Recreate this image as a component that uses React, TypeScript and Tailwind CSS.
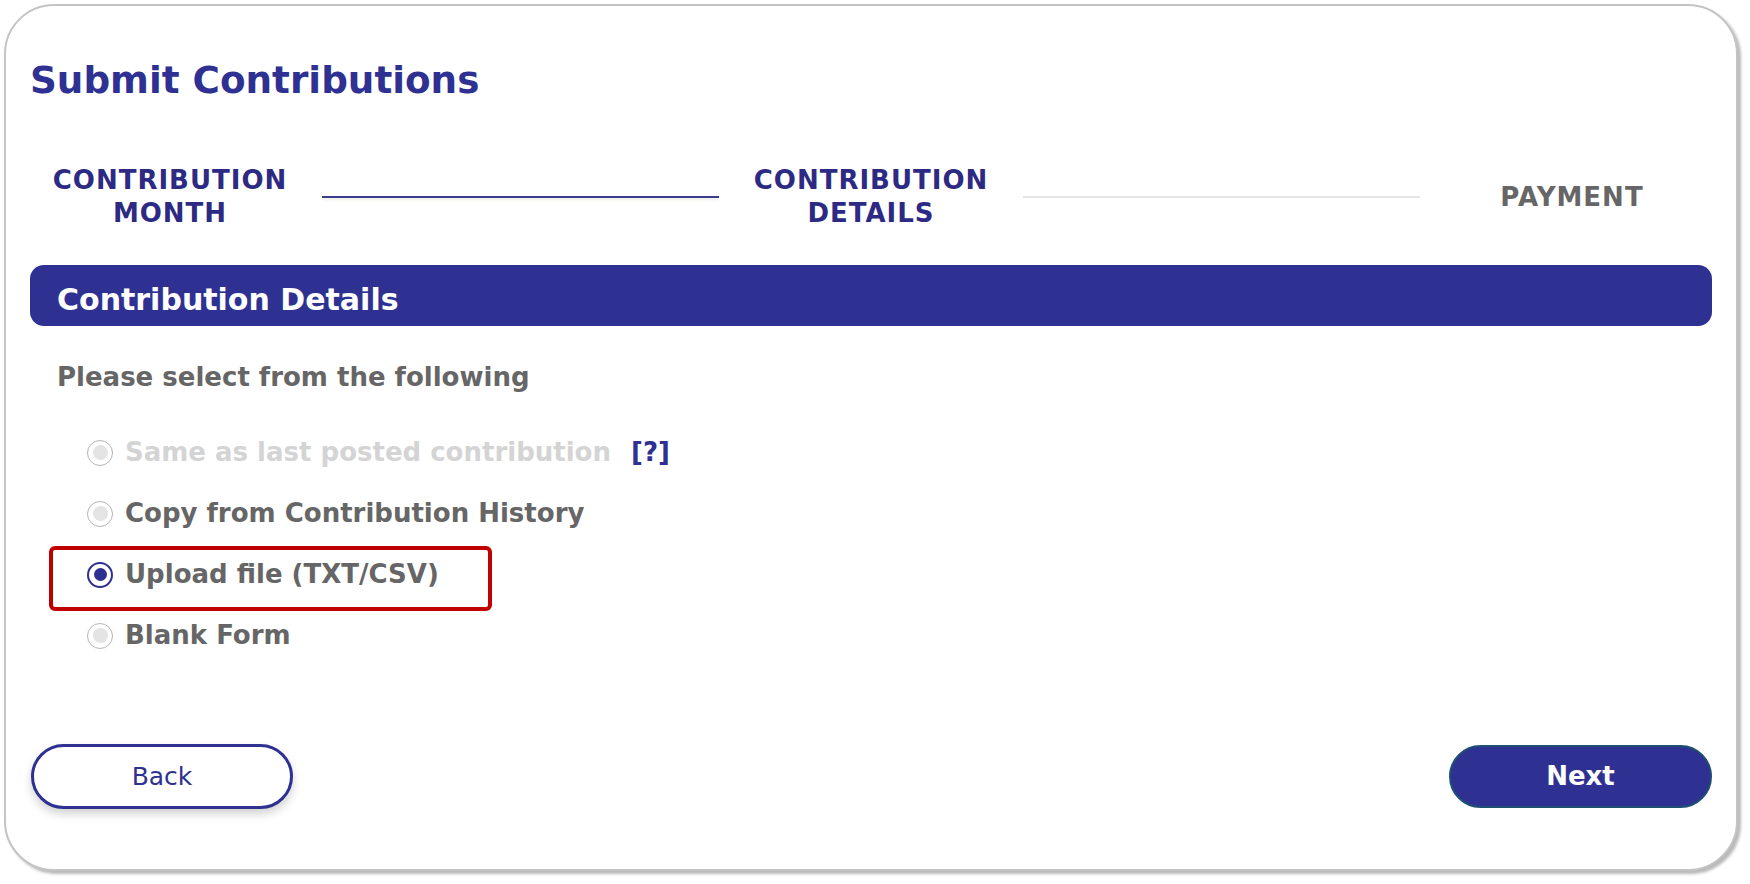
import React from "react";

function Radio({ state }: { state: "off" | "on" | "disabled" }) {
  if (state === "on") {
    return (
      <span className="flex h-[26px] w-[26px] shrink-0 items-center justify-center rounded-full border-2 border-[#2e3192] bg-white">
        <span className="h-[13px] w-[13px] rounded-full bg-[#2e3192]" />
      </span>
    );
  }
  return (
    <span className="flex h-[26px] w-[26px] shrink-0 items-center justify-center rounded-full border border-[#b5b5b5] bg-white">
      <span className="h-[15px] w-[15px] rounded-full bg-[#e4e4e4]" />
    </span>
  );
}

export default function App() {
  const font = { fontFamily: '"DejaVu Sans", Verdana, sans-serif' };
  return (
    <div className="h-[884px] w-[1750px] bg-white" style={font}>
      <div className="ml-[4px] pt-[4px]">
        <div className="flex h-[867px] w-[1734px] flex-col rounded-[50px] border-2 border-[#c4c4c4] bg-white px-[24px] shadow-[3px_3px_3px_rgba(0,0,0,0.28)]">
          <h1 className="mt-[52px] text-[37.3px] font-bold leading-[45px] text-[#2e3192]">
            Submit Contributions
          </h1>

          <div className="mt-[61px] flex items-center">
            <div className="w-[280px] text-center text-[26px] font-bold leading-[33px] tracking-[1px] text-[#2d2a84]">
              CONTRIBUTION
              <br />
              MONTH
            </div>
            <div className="mx-[12px] h-[2px] flex-1 bg-[#3b3a8c] shadow-[0_2px_3px_rgba(200,200,170,0.35)]" />
            <div className="w-[280px] text-center text-[26px] font-bold leading-[33px] tracking-[1px] text-[#2d2a84]">
              CONTRIBUTION
              <br />
              DETAILS
            </div>
            <div className="mx-[12px] h-[2px] flex-1 bg-[#e6e6e8]" />
            <div className="w-[280px] text-center text-[26px] font-bold leading-[33px] tracking-[1px] text-[#666666]">
              PAYMENT
            </div>
          </div>

          <div className="mt-[35px] flex h-[61px] items-center rounded-[14px] bg-[#2e3192] pl-[27px] pt-[7px]">
            <span className="text-[30px] font-bold text-white">Contribution Details</span>
          </div>

          <div className="mt-[36px] pl-[27px] text-[26px] font-bold leading-[30px] text-[#666666]">
            Please select from the following
          </div>

          <div className="mt-[30px] flex flex-col">
            <div className="flex h-[61px] items-center pl-[57px]">
              <Radio state="disabled" />
              <span className="ml-[12px] text-[26px] font-bold text-[#d4d4d4]">
                Same as last posted contribution
              </span>
              <span className="ml-[20px] text-[26px] font-bold text-[#2e3192]">[?]</span>
            </div>
            <div className="flex h-[61px] items-center pl-[57px]">
              <Radio state="off" />
              <span className="ml-[12px] text-[26px] font-bold text-[#666666]">
                Copy from Contribution History
              </span>
            </div>
            <div className="relative flex h-[61px] items-center pl-[57px]">
              <div className="absolute left-[19px] top-[2px] h-[65px] w-[443px] rounded-[6px] border-4 border-[#c00000]" />
              <Radio state="on" />
              <span className="ml-[12px] text-[26px] font-bold text-[#666666]">
                Upload file (TXT/CSV)
              </span>
            </div>
            <div className="flex h-[61px] items-center pl-[57px]">
              <Radio state="off" />
              <span className="ml-[12px] text-[26px] font-bold text-[#666666]">Blank Form</span>
            </div>
          </div>

          <div className="mt-[78px] flex items-center justify-between pl-[1px]">
            <button className="flex h-[65px] w-[262px] items-center justify-center rounded-full border-[3px] border-[#2e3192] bg-white text-[25px] text-[#2e3192] shadow-[0_5px_10px_rgba(0,0,0,0.18)]">
              Back
            </button>
            <button className="flex h-[63px] w-[263px] items-center justify-center rounded-full border-2 border-[#1f4f72] bg-[#2e3192] text-[26px] font-bold text-white">
              Next
            </button>
          </div>
        </div>
      </div>
    </div>
  );
}
